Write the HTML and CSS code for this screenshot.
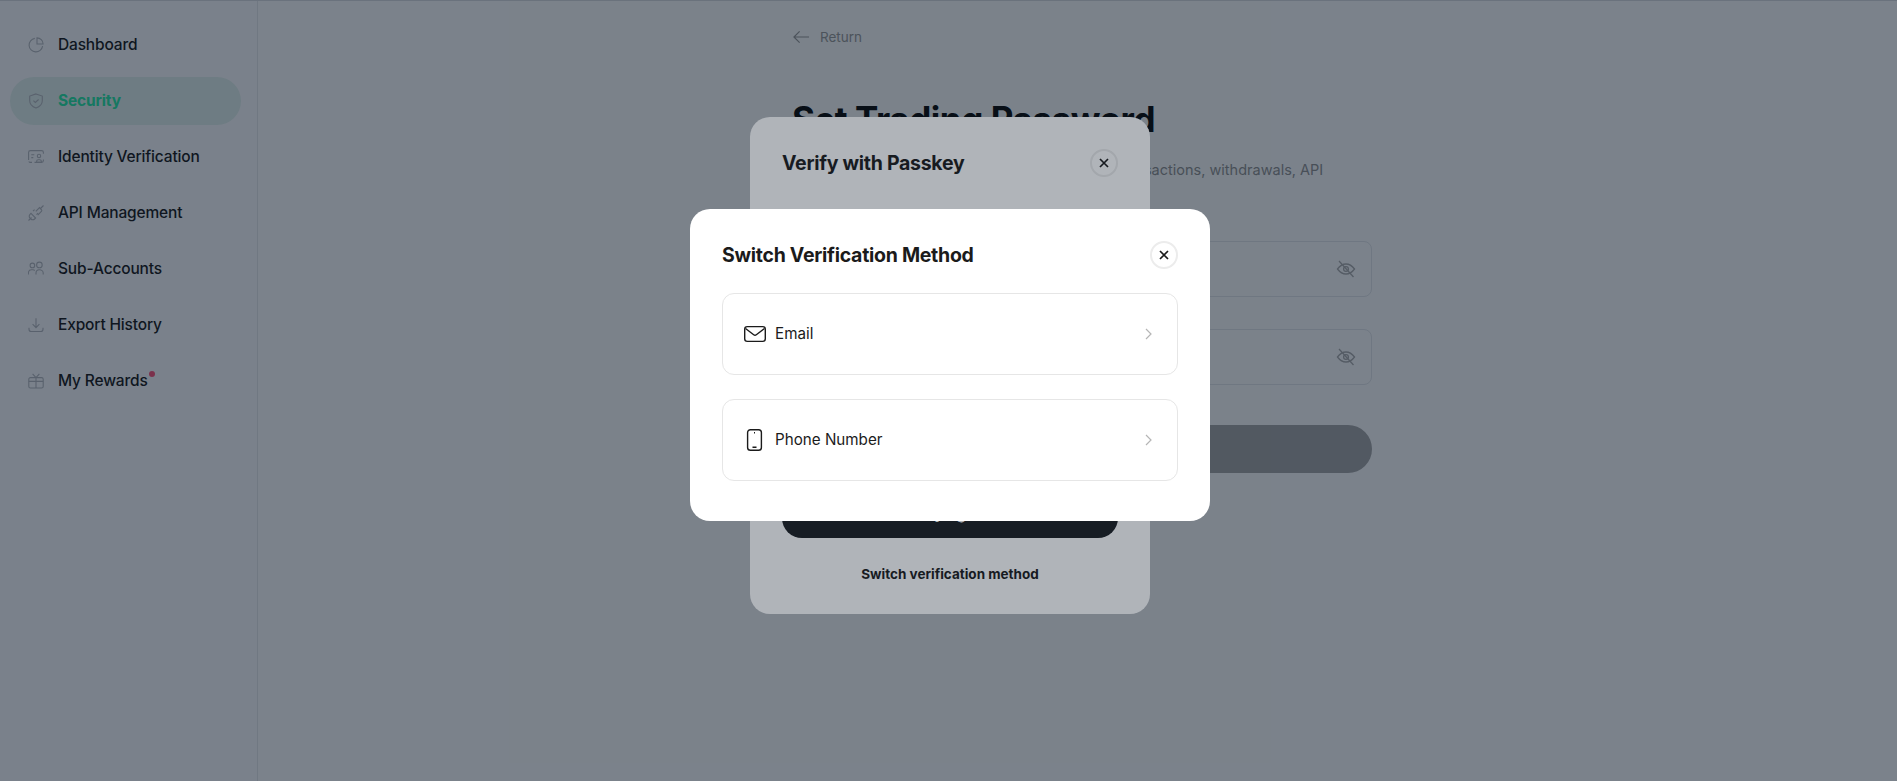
FILE: index.html
```html
<!DOCTYPE html>
<html lang="en">
<head>
<meta charset="utf-8">
<title>Set Trading Password</title>
<link rel="stylesheet" href="styles.css">
</head>
<body>
<div class="app">
  <aside class="sidebar">
    <nav class="nav">
      <a class="nav-item"><svg class="nav-icon" viewBox="0 0 16 16"><path d="M14.6 9.2A6.8 6.8 0 1 1 6.8 1.4"/><path d="M9 .9A6.2 6.2 0 0 1 15.1 7H9z"/></svg><span>Dashboard</span></a>
      <a class="nav-item active"><svg class="nav-icon" viewBox="0 0 16 16"><path d="M8 .9l6.3 2.2v4.6c0 3.6-2.8 6-6.3 7.4-3.5-1.4-6.3-3.8-6.3-7.4V3.1z"/><path d="M5.4 7.7l1.9 1.8 3.3-3"/></svg><span>Security</span></a>
      <a class="nav-item"><svg class="nav-icon" viewBox="0 0 16 16"><path d="M.6 11V3.4c0-1 .8-1.8 1.8-1.8h11.2c1 0 1.8.8 1.8 1.8v1.4"/><path d="M15.4 10.5v1.1c0 1-.8 1.8-1.8 1.8H6.5M4 13.4H2.4c-.7 0-1.3-.4-1.6-1"/><path d="M3.3 5.8h3M3.3 8.6h2"/><circle cx="11" cy="7" r="1.7"/><path d="M8.6 13.2v-.8c0-1 .8-1.7 1.7-1.7h1.4c1 0 1.7.8 1.7 1.7v.8z"/></svg><span>Identity Verification</span></a>
      <a class="nav-item"><svg class="nav-icon" viewBox="0 0 16 16"><path d="M.5 15.5l3-3M12 4l3.5-3.5"/><path d="M3 8.4l4.6 4.6-1 1a2.6 2.6 0 0 1-3.7 0l-.9-.9a2.6 2.6 0 0 1 0-3.7z"/><path d="M7.8 6.3l3.7-3.7 1.9 1.9c.5.6.5 1.4 0 2L9.7 10.2"/><path d="M5 6.2l1.6-1.6M8.5 9.7l1.6-1.6"/></svg><span>API Management</span></a>
      <a class="nav-item"><svg class="nav-icon" viewBox="0 0 16 16"><circle cx="4.4" cy="4.4" r="2.3"/><circle cx="11.4" cy="3.9" r="2.8"/><path d="M.4 13.4V12c0-1.8 1.4-3.2 3.2-3.2h1.2c.8 0 1.4.2 2 .7"/><path d="M8 13.4v-1.4c0-1.8 1.5-3.3 3.4-3.3s3.8 1.5 3.8 3.3v1.4"/></svg><span>Sub-Accounts</span></a>
      <a class="nav-item"><svg class="nav-icon" viewBox="0 0 16 16"><path d="M8 1.2v9M4.6 7.2L8 10.6l3.4-3.4"/><path d="M1 10.8v1.4c0 1.3 1 2.3 2.3 2.3h9.4c1.3 0 2.3-1 2.3-2.3v-1.4"/></svg><span>Export History</span></a>
      <a class="nav-item"><svg class="nav-icon" viewBox="0 0 16 16"><rect x=".8" y="4.6" width="14.4" height="10.4" rx="1.6"/><path d="M.8 8.4h14.4M8 4.6V15M8 4.6L4.6.8M8 4.6L11.4.8"/></svg><span class="badge-label">My Rewards</span></a>
    </nav>
  </aside>
  <main class="main">
    <div class="content">
      <a class="back"><svg class="back-icon" viewBox="0 0 18 14"><path d="M17 7H1.2M7 1L1 7l6 6"/></svg><span>Return</span></a>
      <h1 class="page-title">Set Trading Password</h1>
      <p class="page-desc">Set a trading password to secure your funds in transactions, withdrawals, API</p>
      <div class="field"><svg class="eye" viewBox="0 0 20 20"><path d="M1.5 10C4 6.6 6.800 5 10 5s6 1.600 8.500 5c-2.500 3.400-5.300 5-8.500 5s-6-1.600-8.500-5z"/><circle cx="10" cy="10" r="2.400"/><path d="M3 2l14.500 16"/></svg></div>
      <div class="field"><svg class="eye" viewBox="0 0 20 20"><path d="M1.5 10C4 6.6 6.800 5 10 5s6 1.600 8.500 5c-2.500 3.400-5.300 5-8.500 5s-6-1.600-8.500-5z"/><circle cx="10" cy="10" r="2.400"/><path d="M3 2l14.500 16"/></svg></div>
      <button class="submit">Confirm</button>
    </div>
  </main>
</div>

<div class="overlay overlay-back">
  <section class="modal modal-passkey">
    <header class="modal-head">
      <h2 class="modal-title">Verify with Passkey</h2>
      <button class="close"><svg class="close-icon" viewBox="0 0 10 10"><path d="M1 1l8 8M9 1L1 9"/></svg></button>
    </header>
    <div class="passkey-body"></div>
    <button class="verify">Verifying now</button>
    <a class="switch-link">Switch verification method</a>
  </section>
</div>

<div class="overlay overlay-front">
  <section class="modal modal-switch">
    <header class="modal-head">
      <h2 class="modal-title">Switch Verification Method</h2>
      <button class="close"><svg class="close-icon" viewBox="0 0 10 10"><path d="M1 1l8 8M9 1L1 9"/></svg></button>
    </header>
    <div class="options">
      <a class="option">
        <svg class="option-icon" viewBox="0 0 24 24"><rect x="2.700" y="4.600" width="20.600" height="14.800" rx="2.600"/><path d="M3.500 6.500l8.200 6.200c.8.600 1.800.6 2.600 0l8.200-6.200"/></svg>
        <span class="option-label">Email</span>
        <svg class="chevron" viewBox="0 0 16 16"><path d="M6 3l5 5-5 5"/></svg>
      </a>
      <a class="option">
        <svg class="option-icon" viewBox="0 0 24 24"><rect x="5.600" y="1.700" width="13.800" height="20.600" rx="2.800"/><path d="M12 4.700h1M10.500 19.300h4"/></svg>
        <span class="option-label">Phone Number</span>
        <svg class="chevron" viewBox="0 0 16 16"><path d="M6 3l5 5-5 5"/></svg>
      </a>
    </div>
  </section>
</div>
</body>
</html>
```
FILE: styles.css
```css
* { box-sizing: border-box; }
html, body { height: 100%; }
body {
  margin: 0;
  background: #fff;
  color: #111;
  font-family: Inter, "Liberation Sans", sans-serif;
  overflow: hidden;
}
a { color: inherit; text-decoration: none; }
button { font-family: inherit; border: 0; padding: 0; }
h1, h2, p { margin: 0; }

.app { display: flex; height: 100%; border-top: 1px solid #d9dce0; }

.sidebar { width: 258px; flex: none; padding: 20px 16px 0 10px; border-right: 1px solid #e6e8eb; background: #fdfdfe; }
.nav { display: flex; flex-direction: column; gap: 8px; }
.nav-item {
  display: flex; align-items: center; gap: 14px;
  height: 48px; padding-left: 18px; border-radius: 24px;
  font-size: 15.500px; font-weight: 500; letter-spacing: -.16px;
}
.nav-item span { padding-bottom: 2px; }
.nav-item.active { background: #e2f2ed; color: #20e8a2; font-weight: 700; }
.nav-icon { width: 16px; height: 16px; flex: none; fill: none; stroke: #b4b7bd; stroke-width: 1.100; }
.badge-label { position: relative; }
.badge-label::after {
  content: ""; position: absolute; top: 0; right: -7px;
  width: 6px; height: 6px; border-radius: 50%; background: #ff4d74;
}

.main { flex: 1; padding-left: 535px; }
.content { width: 579px; display: flex; flex-direction: column; }
.back { display: flex; align-items: center; gap: 10px; height: 20px; margin-top: 26px; font-size: 13.500px; color: #979797; }
.back-icon { width: 17px; height: 14px; fill: none; stroke: #979797; stroke-width: 1.300; }
.page-title { margin: 50px 0 0 -1px; font-size: 35px; line-height: 44px; font-weight: 700; letter-spacing: -.45px; color: #000; }
.page-desc { margin-top: 19px; font-size: 14.500px; line-height: 20px; color: #8f8f8f; white-space: nowrap; }
.field {
  display: flex; align-items: center; justify-content: flex-end;
  height: 56px; margin-top: 32px; padding-right: 15px;
  border: 1px solid #e4e6ea; border-radius: 8px;
}
.page-desc + .field { margin-top: 61px; }
.eye { width: 20px; height: 20px; fill: none; stroke: #ababab; stroke-width: 1.300; }
.submit { height: 48px; margin-top: 40px; border-radius: 24px; background: #a4a4a4; color: #fff; font-size: 16px; font-weight: 600; }

.overlay {
  position: fixed; inset: 0;
  display: flex; align-items: center; justify-content: center;
  padding-left: 3px;
  background: rgba(15, 27, 44, .33);
}
.overlay-back { padding-bottom: 50px; }
.overlay-front { padding-bottom: 51px; }

.modal { background: #fff; border-radius: 20px; }
.modal-head { display: flex; align-items: center; justify-content: space-between; height: 28px; }
.modal-title { font-size: 19.500px; line-height: 28px; font-weight: 700; letter-spacing: -.28px; color: #1b1b1b; }
.close {
  display: flex; align-items: center; justify-content: center;
  width: 28px; height: 28px; border-radius: 50%;
  background: #fff; border: 2px solid #ececec;
}
.close-icon { width: 10px; height: 10px; fill: none; stroke: #1b1b1b; stroke-width: 1.700; }

.modal-passkey { width: 400px; height: 497px; padding: 32px 32px 0; display: flex; flex-direction: column; }
.passkey-body { height: 313px; flex: none; }
.verify { height: 48px; flex: none; padding-bottom: 1px; border-radius: 20px; background: #1b1e22; color: #fff; font-size: 15px; font-weight: 600; }
.switch-link { margin-top: 26px; text-align: center; font-size: 13.500px; line-height: 20px; font-weight: 700; color: #1b1b1b; }

.modal-switch { width: 520px; padding: 32px 32px 40px; }
.options { display: flex; flex-direction: column; gap: 24px; margin-top: 24px; }
.option {
  display: flex; align-items: center; gap: 9px;
  height: 82px; padding: 0 21px 0 19px;
  border: 1px solid #e6e6e6; border-radius: 12px;
}
.option-icon { width: 24px; height: 24px; flex: none; fill: none; stroke: #1b1b1b; stroke-width: 1.400; }
.option-label { flex: 1; padding-bottom: 2px; font-size: 15.200px; color: #1b1b1b; }
.chevron { width: 16px; height: 16px; flex: none; fill: none; stroke: #b5b5b5; stroke-width: 1.200; }
```
